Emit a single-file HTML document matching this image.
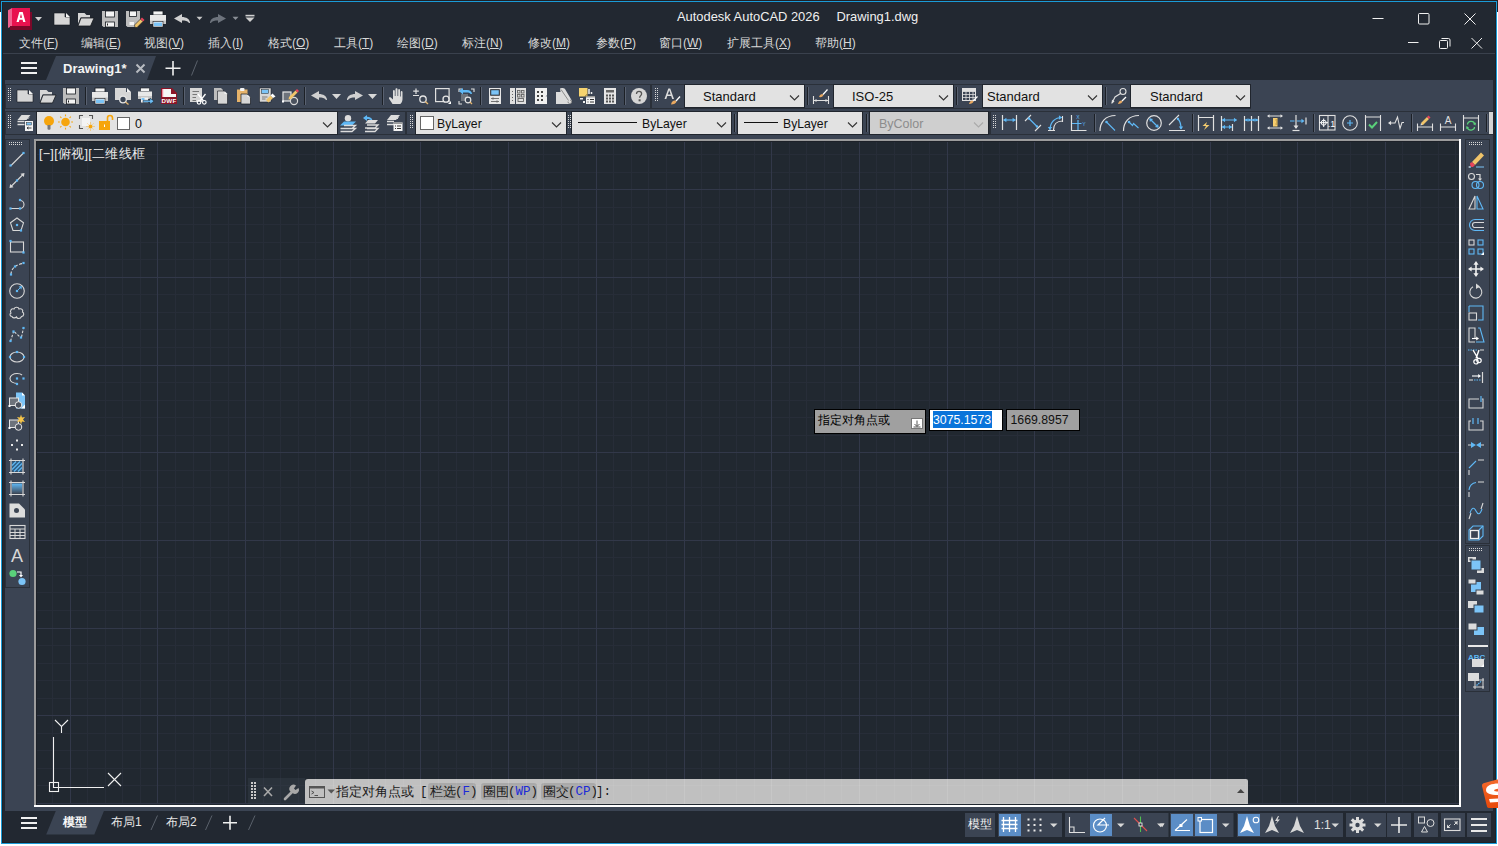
<!DOCTYPE html><html><head><meta charset="utf-8"><style>
*{margin:0;padding:0;box-sizing:border-box}
html,body{width:1498px;height:846px;overflow:hidden;background:#fff;font-family:"Liberation Sans",sans-serif}
div{position:absolute}
.t{white-space:nowrap;line-height:1.15}
.t u{text-decoration:underline;text-underline-offset:1px}
.k{background:#a6a6a6;border-radius:3px;padding:0 1px}
.k b{font-weight:normal;color:#2020c8;font-family:"Liberation Mono",monospace}
svg{position:absolute;left:0;top:0}
</style></head><body><div style="left:0px;top:0px;width:1498px;height:1px;background:#1f2126"></div><div style="left:0px;top:0px;width:1px;height:12px;background:#1f2126"></div><div style="left:1497px;top:0px;width:1px;height:12px;background:#1f2126"></div><div style="left:1px;top:1px;width:1496px;height:843px;background:#1a9bd7"></div><div style="left:2px;top:2px;width:1494px;height:841px;background:#1d2127"></div><div style="left:3px;top:2px;width:1492px;height:840px;background:#222831"></div><div style="left:3px;top:53px;width:1492px;height:1px;background:#3a414d"></div><div style="left:5px;top:80px;width:1488px;height:731px;background:#3b4453"></div><div style="left:5px;top:84px;width:646px;height:25px;background:#3b4453;box-shadow:inset 0 0 0 1px #2a3039;"></div><div style="left:651px;top:84px;width:600px;height:25px;background:#3b4453;box-shadow:inset 0 0 0 1px #2a3039;"></div><div style="left:5px;top:111px;width:401px;height:24px;background:#3b4453;box-shadow:inset 0 0 0 1px #2a3039;"></div><div style="left:406px;top:111px;width:584px;height:24px;background:#3b4453;box-shadow:inset 0 0 0 1px #2a3039;"></div><div style="left:990px;top:111px;width:503px;height:24px;background:#3b4453;box-shadow:inset 0 0 0 1px #2a3039;"></div><div style="left:685px;top:85px;width:119px;height:22px;background:#e2e2e2;box-shadow:0 0 0 1px #20252d;"></div><div style="left:834px;top:85px;width:119px;height:22px;background:#e2e2e2;box-shadow:0 0 0 1px #20252d;"></div><div style="left:983px;top:85px;width:119px;height:22px;background:#e2e2e2;box-shadow:0 0 0 1px #20252d;"></div><div style="left:1131px;top:85px;width:119px;height:22px;background:#e2e2e2;box-shadow:0 0 0 1px #20252d;"></div><div style="left:37px;top:112px;width:300px;height:22px;background:#e2e2e2;box-shadow:0 0 0 1px #20252d;"></div><div style="left:416px;top:112px;width:150px;height:22px;background:#e2e2e2;box-shadow:0 0 0 1px #20252d;"></div><div style="left:572px;top:112px;width:159px;height:22px;background:#e2e2e2;box-shadow:0 0 0 1px #20252d;"></div><div style="left:738px;top:112px;width:124px;height:22px;background:#e2e2e2;box-shadow:0 0 0 1px #20252d;"></div><div style="left:870px;top:112px;width:118px;height:22px;background:#cfcfcf;box-shadow:0 0 0 1px #20252d;"></div><div style="left:5px;top:139px;width:25px;height:449px;background:#3b4453;box-shadow:inset 0 0 0 1px #2a3039;"></div><div style="left:34px;top:139px;width:1427px;height:668px;background:#212830;"></div><div style="left:1465px;top:139px;width:25px;height:405px;background:#3b4453;box-shadow:inset 0 0 0 1px #2a3039;"></div><div style="left:1465px;top:545px;width:25px;height:147px;background:#3b4453;box-shadow:inset 0 0 0 1px #2a3039;"></div><svg width="1498" height="846" viewBox="0 0 1498 846"><path d="M56 56 L156 56 L147 80 L46 80 Z" fill="#3b4453"/><path d="M790.0 95.5 L794.5 100.0 L799.0 95.5" stroke="#333" stroke-width="1.1" fill="none"/><path d="M939.0 95.5 L943.5 100.0 L948.0 95.5" stroke="#333" stroke-width="1.1" fill="none"/><path d="M1088.0 95.5 L1092.5 100.0 L1097.0 95.5" stroke="#333" stroke-width="1.1" fill="none"/><path d="M1236.0 95.5 L1240.5 100.0 L1245.0 95.5" stroke="#333" stroke-width="1.1" fill="none"/><path d="M323.0 122.5 L327.5 127.0 L332.0 122.5" stroke="#333" stroke-width="1.1" fill="none"/><path d="M552.0 122.5 L556.5 127.0 L561.0 122.5" stroke="#333" stroke-width="1.1" fill="none"/><path d="M717.0 122.5 L721.5 127.0 L726.0 122.5" stroke="#333" stroke-width="1.1" fill="none"/><path d="M848.0 122.5 L852.5 127.0 L857.0 122.5" stroke="#333" stroke-width="1.1" fill="none"/><path d="M974.0 122.5 L978.5 127.0 L983.0 122.5" stroke="#aaa" stroke-width="1.1" fill="none"/></svg><div class="t" style="left:677px;top:9.5px;font-size:12.9px;color:#f0f0f0;">Autodesk AutoCAD 2026</div><div class="t" style="left:836.5px;top:9.5px;font-size:12.9px;color:#f0f0f0;">Drawing1.dwg</div><div class="t" style="left:19px;top:37px;font-size:12px;color:#d8d8d8;">文件(<u>F</u>)</div><div class="t" style="left:81px;top:37px;font-size:12px;color:#d8d8d8;">编辑(<u>E</u>)</div><div class="t" style="left:144px;top:37px;font-size:12px;color:#d8d8d8;">视图(<u>V</u>)</div><div class="t" style="left:208px;top:37px;font-size:12px;color:#d8d8d8;">插入(<u>I</u>)</div><div class="t" style="left:268px;top:37px;font-size:12px;color:#d8d8d8;">格式(<u>O</u>)</div><div class="t" style="left:334px;top:37px;font-size:12px;color:#d8d8d8;">工具(<u>T</u>)</div><div class="t" style="left:397px;top:37px;font-size:12px;color:#d8d8d8;">绘图(<u>D</u>)</div><div class="t" style="left:462px;top:37px;font-size:12px;color:#d8d8d8;">标注(<u>N</u>)</div><div class="t" style="left:528px;top:37px;font-size:12px;color:#d8d8d8;">修改(<u>M</u>)</div><div class="t" style="left:596px;top:37px;font-size:12px;color:#d8d8d8;">参数(<u>P</u>)</div><div class="t" style="left:659px;top:37px;font-size:12px;color:#d8d8d8;">窗口(<u>W</u>)</div><div class="t" style="left:727px;top:37px;font-size:12px;color:#d8d8d8;">扩展工具(<u>X</u>)</div><div class="t" style="left:815px;top:37px;font-size:12px;color:#d8d8d8;">帮助(<u>H</u>)</div><div class="t" style="left:63px;top:62px;font-size:13px;font-weight:bold;color:#f4f4f4;">Drawing1*</div><div class="t" style="left:703px;top:90px;font-size:13px;color:#111;">Standard</div><div class="t" style="left:852px;top:90px;font-size:13px;color:#111;">ISO-25</div><div class="t" style="left:987px;top:90px;font-size:13px;color:#111;">Standard</div><div class="t" style="left:1150px;top:90px;font-size:13px;color:#111;">Standard</div><div class="t" style="left:135px;top:117px;font-size:12.5px;color:#111;">0</div><div class="t" style="left:437px;top:117px;font-size:12.2px;color:#111;">ByLayer</div><div class="t" style="left:642px;top:117px;font-size:12.2px;color:#111;">ByLayer</div><div class="t" style="left:783px;top:117px;font-size:12.2px;color:#111;">ByLayer</div><div class="t" style="left:879px;top:117px;font-size:12.5px;color:#8c8c8c;">ByColor</div><svg width="1498" height="846" viewBox="0 0 1498 846"><rect x="52" y="141" width="1" height="663" fill="#272d38"/><rect x="87" y="141" width="1" height="663" fill="#272d38"/><rect x="105" y="141" width="1" height="663" fill="#272d38"/><rect x="122" y="141" width="1" height="663" fill="#272d38"/><rect x="140" y="141" width="1" height="663" fill="#272d38"/><rect x="175" y="141" width="1" height="663" fill="#272d38"/><rect x="193" y="141" width="1" height="663" fill="#272d38"/><rect x="210" y="141" width="1" height="663" fill="#272d38"/><rect x="228" y="141" width="1" height="663" fill="#272d38"/><rect x="263" y="141" width="1" height="663" fill="#272d38"/><rect x="280" y="141" width="1" height="663" fill="#272d38"/><rect x="298" y="141" width="1" height="663" fill="#272d38"/><rect x="315" y="141" width="1" height="663" fill="#272d38"/><rect x="350" y="141" width="1" height="663" fill="#272d38"/><rect x="368" y="141" width="1" height="663" fill="#272d38"/><rect x="385" y="141" width="1" height="663" fill="#272d38"/><rect x="403" y="141" width="1" height="663" fill="#272d38"/><rect x="438" y="141" width="1" height="663" fill="#272d38"/><rect x="456" y="141" width="1" height="663" fill="#272d38"/><rect x="473" y="141" width="1" height="663" fill="#272d38"/><rect x="491" y="141" width="1" height="663" fill="#272d38"/><rect x="526" y="141" width="1" height="663" fill="#272d38"/><rect x="543" y="141" width="1" height="663" fill="#272d38"/><rect x="561" y="141" width="1" height="663" fill="#272d38"/><rect x="578" y="141" width="1" height="663" fill="#272d38"/><rect x="613" y="141" width="1" height="663" fill="#272d38"/><rect x="631" y="141" width="1" height="663" fill="#272d38"/><rect x="648" y="141" width="1" height="663" fill="#272d38"/><rect x="666" y="141" width="1" height="663" fill="#272d38"/><rect x="701" y="141" width="1" height="663" fill="#272d38"/><rect x="719" y="141" width="1" height="663" fill="#272d38"/><rect x="736" y="141" width="1" height="663" fill="#272d38"/><rect x="754" y="141" width="1" height="663" fill="#272d38"/><rect x="789" y="141" width="1" height="663" fill="#272d38"/><rect x="806" y="141" width="1" height="663" fill="#272d38"/><rect x="824" y="141" width="1" height="663" fill="#272d38"/><rect x="841" y="141" width="1" height="663" fill="#272d38"/><rect x="876" y="141" width="1" height="663" fill="#272d38"/><rect x="894" y="141" width="1" height="663" fill="#272d38"/><rect x="911" y="141" width="1" height="663" fill="#272d38"/><rect x="929" y="141" width="1" height="663" fill="#272d38"/><rect x="964" y="141" width="1" height="663" fill="#272d38"/><rect x="982" y="141" width="1" height="663" fill="#272d38"/><rect x="999" y="141" width="1" height="663" fill="#272d38"/><rect x="1017" y="141" width="1" height="663" fill="#272d38"/><rect x="1052" y="141" width="1" height="663" fill="#272d38"/><rect x="1069" y="141" width="1" height="663" fill="#272d38"/><rect x="1087" y="141" width="1" height="663" fill="#272d38"/><rect x="1104" y="141" width="1" height="663" fill="#272d38"/><rect x="1139" y="141" width="1" height="663" fill="#272d38"/><rect x="1157" y="141" width="1" height="663" fill="#272d38"/><rect x="1174" y="141" width="1" height="663" fill="#272d38"/><rect x="1192" y="141" width="1" height="663" fill="#272d38"/><rect x="1227" y="141" width="1" height="663" fill="#272d38"/><rect x="1245" y="141" width="1" height="663" fill="#272d38"/><rect x="1262" y="141" width="1" height="663" fill="#272d38"/><rect x="1280" y="141" width="1" height="663" fill="#272d38"/><rect x="1315" y="141" width="1" height="663" fill="#272d38"/><rect x="1332" y="141" width="1" height="663" fill="#272d38"/><rect x="1350" y="141" width="1" height="663" fill="#272d38"/><rect x="1367" y="141" width="1" height="663" fill="#272d38"/><rect x="1402" y="141" width="1" height="663" fill="#272d38"/><rect x="1420" y="141" width="1" height="663" fill="#272d38"/><rect x="1438" y="141" width="1" height="663" fill="#272d38"/><rect x="1455" y="141" width="1" height="663" fill="#272d38"/><rect x="36" y="154" width="1423" height="1" fill="#272d38"/><rect x="36" y="172" width="1423" height="1" fill="#272d38"/><rect x="36" y="207" width="1423" height="1" fill="#272d38"/><rect x="36" y="224" width="1423" height="1" fill="#272d38"/><rect x="36" y="242" width="1423" height="1" fill="#272d38"/><rect x="36" y="259" width="1423" height="1" fill="#272d38"/><rect x="36" y="294" width="1423" height="1" fill="#272d38"/><rect x="36" y="312" width="1423" height="1" fill="#272d38"/><rect x="36" y="329" width="1423" height="1" fill="#272d38"/><rect x="36" y="347" width="1423" height="1" fill="#272d38"/><rect x="36" y="382" width="1423" height="1" fill="#272d38"/><rect x="36" y="400" width="1423" height="1" fill="#272d38"/><rect x="36" y="417" width="1423" height="1" fill="#272d38"/><rect x="36" y="435" width="1423" height="1" fill="#272d38"/><rect x="36" y="470" width="1423" height="1" fill="#272d38"/><rect x="36" y="487" width="1423" height="1" fill="#272d38"/><rect x="36" y="505" width="1423" height="1" fill="#272d38"/><rect x="36" y="522" width="1423" height="1" fill="#272d38"/><rect x="36" y="557" width="1423" height="1" fill="#272d38"/><rect x="36" y="575" width="1423" height="1" fill="#272d38"/><rect x="36" y="592" width="1423" height="1" fill="#272d38"/><rect x="36" y="610" width="1423" height="1" fill="#272d38"/><rect x="36" y="645" width="1423" height="1" fill="#272d38"/><rect x="36" y="663" width="1423" height="1" fill="#272d38"/><rect x="36" y="680" width="1423" height="1" fill="#272d38"/><rect x="36" y="698" width="1423" height="1" fill="#272d38"/><rect x="36" y="733" width="1423" height="1" fill="#272d38"/><rect x="36" y="750" width="1423" height="1" fill="#272d38"/><rect x="36" y="768" width="1423" height="1" fill="#272d38"/><rect x="36" y="785" width="1423" height="1" fill="#272d38"/><rect x="70" y="141" width="1" height="663" fill="#323849"/><rect x="157" y="141" width="1" height="663" fill="#323849"/><rect x="245" y="141" width="1" height="663" fill="#323849"/><rect x="333" y="141" width="1" height="663" fill="#323849"/><rect x="420" y="141" width="1" height="663" fill="#323849"/><rect x="508" y="141" width="1" height="663" fill="#323849"/><rect x="596" y="141" width="1" height="663" fill="#323849"/><rect x="684" y="141" width="1" height="663" fill="#323849"/><rect x="771" y="141" width="1" height="663" fill="#323849"/><rect x="859" y="141" width="1" height="663" fill="#323849"/><rect x="947" y="141" width="1" height="663" fill="#323849"/><rect x="1034" y="141" width="1" height="663" fill="#323849"/><rect x="1122" y="141" width="1" height="663" fill="#323849"/><rect x="1210" y="141" width="1" height="663" fill="#323849"/><rect x="1297" y="141" width="1" height="663" fill="#323849"/><rect x="1385" y="141" width="1" height="663" fill="#323849"/><rect x="36" y="189" width="1423" height="1" fill="#323849"/><rect x="36" y="277" width="1423" height="1" fill="#323849"/><rect x="36" y="365" width="1423" height="1" fill="#323849"/><rect x="36" y="452" width="1423" height="1" fill="#323849"/><rect x="36" y="540" width="1423" height="1" fill="#323849"/><rect x="36" y="628" width="1423" height="1" fill="#323849"/><rect x="36" y="715" width="1423" height="1" fill="#323849"/><rect x="36" y="803" width="1423" height="1" fill="#323849"/><rect x="34" y="139" width="1427" height="2" fill="#9c9c9c"/><rect x="34" y="139" width="2" height="668" fill="#9c9c9c"/><rect x="36" y="141" width="1423" height="1" fill="#1d2128"/><rect x="36" y="141" width="1" height="664" fill="#1d2128"/><rect x="34" y="805" width="1427" height="2" fill="#ffffff"/><rect x="1459" y="139" width="2" height="668" fill="#ffffff"/></svg><div class="t" style="left:39px;top:147px;font-size:12.5px;color:#ececec;letter-spacing:0.3px;">[−][俯视][二维线框</div><div style="left:248px;top:778px;width:57px;height:26px;background:rgba(60,68,80,0.35);"></div><div style="left:305px;top:779px;width:943px;height:25px;background:#c0c0c0;border-radius:3px 2px 0 0;"></div><div style="left:428px;top:783px;width:48px;height:17px;background:#a9a9a9;border-radius:3px;"></div><div style="left:481px;top:783px;width:56px;height:17px;background:#a9a9a9;border-radius:3px;"></div><div style="left:541px;top:783px;width:55px;height:17px;background:#a9a9a9;border-radius:3px;"></div><div style="left:814px;top:409px;width:112px;height:25px;background:#a0a0a0;border:1.5px solid #000;"></div><div style="left:911px;top:418px;width:12px;height:11px;background:#fff;border:1px solid #777;"></div><div style="left:929px;top:409px;width:74px;height:22px;background:#fff;border:1.5px solid #000;"></div><div style="left:933px;top:411px;width:59px;height:17px;background:#0a74da;"></div><div style="left:1006px;top:409px;width:74px;height:22px;background:#a0a0a0;border:1.5px solid #000;"></div><svg width="1498" height="846" viewBox="0 0 1498 846"><rect x="315" y="779" width="1" height="25" fill="rgba(255,255,255,0.06)"/><rect x="333" y="779" width="1" height="25" fill="rgba(255,255,255,0.12)"/><rect x="350" y="779" width="1" height="25" fill="rgba(255,255,255,0.06)"/><rect x="368" y="779" width="1" height="25" fill="rgba(255,255,255,0.06)"/><rect x="385" y="779" width="1" height="25" fill="rgba(255,255,255,0.06)"/><rect x="403" y="779" width="1" height="25" fill="rgba(255,255,255,0.06)"/><rect x="420" y="779" width="1" height="25" fill="rgba(255,255,255,0.12)"/><rect x="438" y="779" width="1" height="25" fill="rgba(255,255,255,0.06)"/><rect x="456" y="779" width="1" height="25" fill="rgba(255,255,255,0.06)"/><rect x="473" y="779" width="1" height="25" fill="rgba(255,255,255,0.06)"/><rect x="491" y="779" width="1" height="25" fill="rgba(255,255,255,0.06)"/><rect x="508" y="779" width="1" height="25" fill="rgba(255,255,255,0.12)"/><rect x="526" y="779" width="1" height="25" fill="rgba(255,255,255,0.06)"/><rect x="543" y="779" width="1" height="25" fill="rgba(255,255,255,0.06)"/><rect x="561" y="779" width="1" height="25" fill="rgba(255,255,255,0.06)"/><rect x="578" y="779" width="1" height="25" fill="rgba(255,255,255,0.06)"/><rect x="596" y="779" width="1" height="25" fill="rgba(255,255,255,0.12)"/><rect x="613" y="779" width="1" height="25" fill="rgba(255,255,255,0.06)"/><rect x="631" y="779" width="1" height="25" fill="rgba(255,255,255,0.06)"/><rect x="648" y="779" width="1" height="25" fill="rgba(255,255,255,0.06)"/><rect x="666" y="779" width="1" height="25" fill="rgba(255,255,255,0.06)"/><rect x="684" y="779" width="1" height="25" fill="rgba(255,255,255,0.12)"/><rect x="701" y="779" width="1" height="25" fill="rgba(255,255,255,0.06)"/><rect x="719" y="779" width="1" height="25" fill="rgba(255,255,255,0.06)"/><rect x="736" y="779" width="1" height="25" fill="rgba(255,255,255,0.06)"/><rect x="754" y="779" width="1" height="25" fill="rgba(255,255,255,0.06)"/><rect x="771" y="779" width="1" height="25" fill="rgba(255,255,255,0.12)"/><rect x="789" y="779" width="1" height="25" fill="rgba(255,255,255,0.06)"/><rect x="806" y="779" width="1" height="25" fill="rgba(255,255,255,0.06)"/><rect x="824" y="779" width="1" height="25" fill="rgba(255,255,255,0.06)"/><rect x="841" y="779" width="1" height="25" fill="rgba(255,255,255,0.06)"/><rect x="859" y="779" width="1" height="25" fill="rgba(255,255,255,0.12)"/><rect x="876" y="779" width="1" height="25" fill="rgba(255,255,255,0.06)"/><rect x="894" y="779" width="1" height="25" fill="rgba(255,255,255,0.06)"/><rect x="911" y="779" width="1" height="25" fill="rgba(255,255,255,0.06)"/><rect x="929" y="779" width="1" height="25" fill="rgba(255,255,255,0.06)"/><rect x="947" y="779" width="1" height="25" fill="rgba(255,255,255,0.12)"/><rect x="964" y="779" width="1" height="25" fill="rgba(255,255,255,0.06)"/><rect x="982" y="779" width="1" height="25" fill="rgba(255,255,255,0.06)"/><rect x="999" y="779" width="1" height="25" fill="rgba(255,255,255,0.06)"/><rect x="1017" y="779" width="1" height="25" fill="rgba(255,255,255,0.06)"/><rect x="1034" y="779" width="1" height="25" fill="rgba(255,255,255,0.12)"/><rect x="1052" y="779" width="1" height="25" fill="rgba(255,255,255,0.06)"/><rect x="1069" y="779" width="1" height="25" fill="rgba(255,255,255,0.06)"/><rect x="1087" y="779" width="1" height="25" fill="rgba(255,255,255,0.06)"/><rect x="1104" y="779" width="1" height="25" fill="rgba(255,255,255,0.06)"/><rect x="1122" y="779" width="1" height="25" fill="rgba(255,255,255,0.12)"/><rect x="1139" y="779" width="1" height="25" fill="rgba(255,255,255,0.06)"/><rect x="1157" y="779" width="1" height="25" fill="rgba(255,255,255,0.06)"/><rect x="1174" y="779" width="1" height="25" fill="rgba(255,255,255,0.06)"/><rect x="1192" y="779" width="1" height="25" fill="rgba(255,255,255,0.06)"/><rect x="1210" y="779" width="1" height="25" fill="rgba(255,255,255,0.12)"/><rect x="1227" y="779" width="1" height="25" fill="rgba(255,255,255,0.06)"/><rect x="1245" y="779" width="1" height="25" fill="rgba(255,255,255,0.06)"/><rect x="306" y="785" width="941" height="1" fill="rgba(255,255,255,0.06)"/><rect x="306" y="803" width="941" height="1" fill="rgba(255,255,255,0.12)"/></svg><div class="t" style="left:336px;top:785px;font-size:13px;color:#1a1a1a;">指定对角点或</div><div class="t" style="left:420px;top:785px;font-size:12.5px;color:#1a1a1a;font-family:'Liberation Mono',monospace;">[</div><div class="t" style="left:430px;top:785px;font-size:13px;color:#1a1a1a;">栏选</div><div class="t" style="left:455px;top:785px;font-size:12.5px;color:#1a1a1a;font-family:'Liberation Mono',monospace;">(<span style="color:#1c2ad8">F</span>)</div><div class="t" style="left:483px;top:785px;font-size:13px;color:#1a1a1a;">圈围</div><div class="t" style="left:508px;top:785px;font-size:12.5px;color:#1a1a1a;font-family:'Liberation Mono',monospace;">(<span style="color:#1c2ad8">WP</span>)</div><div class="t" style="left:543px;top:785px;font-size:13px;color:#1a1a1a;">圈交</div><div class="t" style="left:568px;top:785px;font-size:12.5px;color:#1a1a1a;font-family:'Liberation Mono',monospace;">(<span style="color:#1c2ad8">CP</span>)</div><div class="t" style="left:596px;top:785px;font-size:12.5px;color:#1a1a1a;font-family:'Liberation Mono',monospace;">]:</div><div class="t" style="left:818px;top:413.5px;font-size:12px;color:#000;">指定对角点或</div><div class="t" style="left:933px;top:413px;font-size:12.3px;color:#fff;">3075.1573</div><div class="t" style="left:1010.5px;top:413px;font-size:12.3px;color:#111;">1669.8957</div><svg width="1498" height="846" viewBox="0 0 1498 846"><path d="M8 10.3L12 8V26L8 28Z" fill="#ef6390"/><rect x="10" y="26" width="22" height="4" fill="#7b0829"/><rect x="30" y="12" width="2" height="18" fill="#7b0829"/><rect x="12" y="8" width="18" height="18" fill="#e8124f"/><path d="M16.5 22L19.3 12H22.7L25.5 22H23.2L22.6 19.7H19.4L18.8 22ZM19.9 17.7H22.1L21 13.8Z" fill="#fff"/><path d="M35 17H42L38.5 21Z" fill="#d0d0d0"/><g transform="translate(54 11)"><path d="M0 2H11V6H16V14H0Z" fill="#d6d6d6" stroke="#161a20" stroke-width="0.6"/><path d="M12 2L16 6H12Z" fill="#f4f4f4"/></g><g transform="translate(78 11)"><path d="M0 2H6.5L8.5 4H12V6.5H2.5L0 13Z" fill="#d6d6d6"/><path d="M3 7H16L12.5 15H0Z" fill="#d6d6d6" stroke="#161a20" stroke-width="0.8"/></g><g transform="translate(102 11)"><path d="M0 0H16V16H1.5L0 14.5Z" fill="#bdbdbd"/><rect x="3.5" y="0" width="9" height="6" fill="#f4f4f4" stroke="#161a20" stroke-width="0.8"/><rect x="3.5" y="11" width="9" height="5" fill="#f4f4f4" stroke="#161a20" stroke-width="0.8"/><rect x="5" y="12.5" width="1" height="2" fill="#222"/></g><g transform="translate(126 11)"><path d="M0 0H14V11L9 16H1.5L0 14.5Z" fill="#bdbdbd"/><rect x="3.5" y="0" width="7" height="5.5" fill="#f4f4f4" stroke="#161a20" stroke-width="0.8"/><path d="M3.5 11H8V14H3.5Z" fill="#f4f4f4"/><path d="M9 16.5L8.5 14L14.5 8L17 10.5L11 16.5Z" fill="#f0c46a" stroke="#161a20" stroke-width="0.6"/><path d="M14.5 8L16 6.5L18.5 9L17 10.5Z" fill="#e8435a"/></g><g transform="translate(150 11)"><rect x="3" y="0" width="10" height="4" fill="#f4f4f4" stroke="#161a20" stroke-width="0.8"/><rect x="0" y="4" width="16" height="9" fill="#e8e8e8"/><rect x="0" y="9.5" width="16" height="3.5" fill="#c6c6c6"/><rect x="3" y="10.5" width="10" height="5.5" fill="#f4f4f4" stroke="#161a20" stroke-width="0.6"/><rect x="4" y="11.5" width="8" height="3.5" fill="#7cc4f7"/></g><g transform="translate(174 11)"><path d="M0 7.5L8 3V6C12 6 16 8 16 12L15 12C14 10 11 9.5 8 9.5V12Z" fill="#d0d0d0"/></g><path d="M196.5 16.7H202.5L199.5 20.0Z" fill="#c8c8c8"/><g transform="translate(210 11)"><path d="M16 7.5L8 3V6C4 6 0 8 0 12L1 12C2 10 5 9.5 8 9.5V12Z" fill="#6d737c"/></g><path d="M232.5 16.7H238.5L235.5 20.0Z" fill="#8a8f96"/><rect x="245.5" y="14.8" width="9" height="1.6" fill="#d0d0d0"/><path d="M245.5 17.4H254.5L250.0 22.0Z" fill="#d0d0d0"/><g stroke="#f0f0f0" stroke-width="1" fill="none"><path d="M1372.5 18.5H1383.5"/><rect x="1418.5" y="13.5" width="10.5" height="10.5" rx="1"/><path d="M1464.5 13.5L1475.5 24.5M1475.5 13.5L1464.5 24.5"/><path d="M1408 42.5H1418.5"/><rect x="1439.5" y="40.5" width="8" height="8" rx="1"/><path d="M1441.5 38.5H1448.5A1.5 1.5 0 0 1 1450 40V46.5"/><path d="M1471.5 38L1482 48.5M1482 38L1471.5 48.5"/></g><g fill="#f0f0f0"><rect x="21" y="62" width="16" height="2"/><rect x="21" y="67" width="16" height="2"/><rect x="21" y="72" width="16" height="2"/></g><path d="M136.5 64.5L144.5 72.5M144.5 64.5L136.5 72.5" stroke="#b8bcc2" stroke-width="2"/><path d="M165.5 68.2H180.5M173 61V75.5" stroke="#f0f0f0" stroke-width="1.6"/><path d="M191.5 75.5L197.5 60.5" stroke="#5a616b" stroke-width="1"/><rect x="8" y="88" width="1" height="1" fill="#d8d8d8"/><rect x="10" y="88" width="1" height="1" fill="#d8d8d8"/><rect x="8" y="90" width="1" height="1" fill="#d8d8d8"/><rect x="10" y="90" width="1" height="1" fill="#d8d8d8"/><rect x="8" y="92" width="1" height="1" fill="#d8d8d8"/><rect x="10" y="92" width="1" height="1" fill="#d8d8d8"/><rect x="8" y="94" width="1" height="1" fill="#d8d8d8"/><rect x="10" y="94" width="1" height="1" fill="#d8d8d8"/><rect x="8" y="96" width="1" height="1" fill="#d8d8d8"/><rect x="10" y="96" width="1" height="1" fill="#d8d8d8"/><rect x="8" y="98" width="1" height="1" fill="#d8d8d8"/><rect x="10" y="98" width="1" height="1" fill="#d8d8d8"/><rect x="8" y="100" width="1" height="1" fill="#d8d8d8"/><rect x="10" y="100" width="1" height="1" fill="#d8d8d8"/><g transform="translate(17 88)"><path d="M0 2H11V6H16V14H0Z" fill="#d6d6d6" stroke="#161a20" stroke-width="0.6"/><path d="M12 2L16 6H12Z" fill="#f4f4f4"/></g><g transform="translate(40 88)"><path d="M0 2H6.5L8.5 4H12V6.5H2.5L0 13Z" fill="#d6d6d6"/><path d="M3 7H16L12.5 15H0Z" fill="#d6d6d6" stroke="#161a20" stroke-width="0.8"/></g><g transform="translate(63 88)"><path d="M0 0H16V16H1.5L0 14.5Z" fill="#bdbdbd"/><rect x="3.5" y="0" width="9" height="6" fill="#f4f4f4" stroke="#161a20" stroke-width="0.8"/><rect x="3.5" y="11" width="9" height="5" fill="#f4f4f4" stroke="#161a20" stroke-width="0.8"/><rect x="5" y="12.5" width="1" height="2" fill="#222"/></g><rect x="85" y="87" width="1" height="18" fill="#1c2026"/><rect x="86" y="87" width="1" height="18" fill="#596170"/><g transform="translate(92 88)"><rect x="3" y="0" width="10" height="4" fill="#f4f4f4" stroke="#161a20" stroke-width="0.8"/><rect x="0" y="4" width="16" height="9" fill="#e8e8e8"/><rect x="0" y="9.5" width="16" height="3.5" fill="#c6c6c6"/><rect x="3" y="10.5" width="10" height="5.5" fill="#f4f4f4" stroke="#161a20" stroke-width="0.6"/><rect x="4" y="11.5" width="8" height="3.5" fill="#7cc4f7"/></g><g transform="translate(115 88)"><path d="M0 0H11V4H16V12H0Z" fill="#d6d6d6"/><path d="M12 0L16 4H12Z" fill="#f4f4f4"/><circle cx="8" cy="11.5" r="3.3" fill="#3b4453" stroke="#e6e6e6" stroke-width="1.3"/><path d="M10.5 14L13.5 16.5" stroke="#e8b870" stroke-width="1.3"/></g><g transform="translate(138 88)"><rect x="2.5" y="0" width="9" height="3.5" fill="#f4f4f4" stroke="#161a20" stroke-width="0.6"/><rect x="0" y="3.5" width="14" height="7.5" fill="#e8e8e8"/><rect x="0" y="8" width="14" height="3" fill="#c6c6c6"/><rect x="3" y="9.5" width="7" height="5" fill="#f4f4f4"/><rect x="3.5" y="10" width="3" height="2" fill="#7cc4f7"/><path d="M5 12.3H12V10L16 13.2L12 16.3V14.3H5Z" fill="#6cbdf5" stroke="#161a20" stroke-width="0.5"/></g><g transform="translate(161 88)"><path d="M0 0H11L16 5V16H0Z" fill="#8c1427"/><path d="M1 1H10V6H15V9H1Z" fill="#f6f6f6"/><rect x="1" y="1" width="1.2" height="8" fill="#f08aa0"/><text x="8" y="15" font-family="Liberation Sans" font-weight="bold" font-size="6.2" fill="#fff" text-anchor="middle" letter-spacing="0.3">DWF</text></g><rect x="183" y="87" width="1" height="18" fill="#1c2026"/><rect x="184" y="87" width="1" height="18" fill="#596170"/><g transform="translate(190 88)"><rect x="0" y="0" width="12" height="14" fill="#d6d6d6"/><path d="M2.5 3.5H9M2.5 6.5H7M2.5 9.5H6M2.5 12.5H6" stroke="#777" stroke-width="1"/><path d="M8 6L13.5 13M15.5 6L10 13" stroke="#fff" stroke-width="1.3"/><circle cx="9" cy="14.3" r="1.8" fill="none" stroke="#fff" stroke-width="1.2"/><circle cx="14.3" cy="14.3" r="1.8" fill="none" stroke="#fff" stroke-width="1.2"/></g><g transform="translate(214 88)"><path d="M0 0H7L9 2V12H0Z" fill="#bdbdbd"/><path d="M3.5 3H10L13.5 6.5V16H3.5Z" fill="#d6d6d6" stroke="#161a20" stroke-width="0.6"/><path d="M10.5 3L13.5 6H10.5Z" fill="#f4f4f4"/></g><g transform="translate(237 88)"><rect x="0" y="1.5" width="10.5" height="12.5" fill="#e6b36a"/><rect x="3" y="0" width="4.5" height="3" rx="1" fill="#f4f4f4"/><path d="M4 6H10L13.5 9.5V16H4Z" fill="#d6d6d6" stroke="#161a20" stroke-width="0.7"/><path d="M10.5 6.5L13 9H10.5Z" fill="#f4f4f4"/></g><g transform="translate(259.5 88)"><rect x="0" y="0" width="11.5" height="14" fill="#d6d6d6" stroke="#161a20" stroke-width="0.5"/><rect x="2" y="1.5" width="7" height="4" fill="#7cc4f7" stroke="#222" stroke-width="0.5"/><path d="M2.5 9H8M2.5 11H6" stroke="#666" stroke-width="0.8"/><path d="M6.5 12L11 7.5L13.5 10L9 14.5Z" fill="#f0c46a"/><path d="M11 7.5L13 5.5L16 8.5L13.5 10Z" fill="#fff"/></g><g transform="translate(282 88)"><rect x="1" y="4" width="8" height="9" fill="#6d737c" stroke="#e6e6e6" stroke-width="1.2"/><rect x="0" y="12.5" width="2" height="2" fill="#fff"/><circle cx="12" cy="13" r="3.6" fill="#4b525e" stroke="#d8d8d8" stroke-width="1.2"/><path d="M7 9L13.5 2.5L15.5 4.5L9 11L6.5 11.5Z" fill="#f0c46a"/><path d="M13.5 2.5L15 1L17 3L15.5 4.5Z" fill="#e8435a"/></g><rect x="304" y="87" width="1" height="18" fill="#1c2026"/><rect x="305" y="87" width="1" height="18" fill="#596170"/><g transform="translate(311 88)"><path d="M0 7.5L8 3V6C12 6 16 8 16 12L15 12C14 10 11 9.5 8 9.5V12Z" fill="#d0d0d0"/></g><path d="M332 94H341L336.5 99Z" fill="#d8d8d8"/><g transform="translate(347 88)"><path d="M16 7.5L8 3V6C4 6 0 8 0 12L1 12C2 10 5 9.5 8 9.5V12Z" fill="#d0d0d0"/></g><path d="M368 94H377L372.5 99Z" fill="#d8d8d8"/><rect x="382" y="87" width="1" height="18" fill="#1c2026"/><rect x="383" y="87" width="1" height="18" fill="#596170"/><g transform="translate(389 88)"><path d="M3.5 16C2 13.5 0.5 11.5 0 10.5C-0.3 9.5 0.8 8.8 1.8 9.5L4 11.5V3C4 1.8 5.8 1.8 5.8 3V8H6.5V1.2C6.5 0 8.5 0 8.5 1.2V8H9.2V2C9.2 0.8 11 0.8 11 2V8.5H11.7V4C11.7 2.8 13.5 2.8 13.5 4V11C13.5 13.5 12 16 11 16Z" fill="#dcdcdc"/></g><g transform="translate(412 88)"><path d="M4 0.5V6M1.2 3.2H6.8M1 7.5H7" stroke="#e0e0e0" stroke-width="1.2"/><circle cx="11" cy="11.2" r="3.2" fill="none" stroke="#e6e6e6" stroke-width="1.3"/><path d="M13.3 13.5L16 16" stroke="#e8b870" stroke-width="1.3"/></g><g transform="translate(435 88)"><rect x="0.6" y="0.6" width="13.5" height="13" fill="none" stroke="#e0e0e0" stroke-width="1.2"/><circle cx="11" cy="11.2" r="3" fill="#3b4453" stroke="#e6e6e6" stroke-width="1.3"/><path d="M13 16L16 13V16Z" fill="#fff"/></g><g transform="translate(458 88)"><path d="M1 4V1H4M13 1H16V4M1 13V16H4" stroke="#e0e0e0" stroke-width="1.1" fill="none"/><rect x="3" y="6" width="7" height="7" fill="#6d737c"/><path d="M1 3L5 0V2H9C12 2 14 4 14 6H12.5C12 5 11 4.5 9 4.5H5V6.5Z" fill="#5fb8f5"/><circle cx="10" cy="12" r="2.8" fill="#3b4453" stroke="#e6e6e6" stroke-width="1.2"/><path d="M12 14L14 16" stroke="#e8b870" stroke-width="1.2"/></g><rect x="480" y="87" width="1" height="18" fill="#1c2026"/><rect x="481" y="87" width="1" height="18" fill="#596170"/><g transform="translate(489 88)"><rect x="0" y="0" width="12" height="16" fill="#e6e6e6"/><rect x="1.2" y="1.2" width="9.6" height="6.5" fill="#1e2228"/><rect x="2.2" y="2.2" width="7.6" height="4.5" fill="#7cc4f7"/><path d="M2 10.5H10M2 13.5H10" stroke="#666" stroke-width="0.9"/><path d="M4 9.5V11.5M8 12.5V14.5" stroke="#666" stroke-width="1.2"/></g><g transform="translate(510 88)"><rect x="0" y="0" width="5" height="16" fill="#e0e0e0"/><rect x="6" y="0" width="10" height="16" fill="#e0e0e0"/><g fill="#666"><rect x="2" y="3" width="1" height="1"/><rect x="2" y="6" width="1" height="1"/><rect x="2" y="9" width="1" height="1"/><rect x="2" y="12" width="1" height="1"/></g><g fill="none" stroke="#666" stroke-width="0.9"><rect x="7.5" y="2.5" width="2.5" height="2.5"/><rect x="11.5" y="2.5" width="2.5" height="2.5"/><rect x="7.5" y="6.5" width="2.5" height="2.5"/><rect x="11.5" y="6.5" width="2.5" height="2.5"/><rect x="8" y="10.5" width="5.5" height="3"/></g></g><g transform="translate(535 88)"><path d="M0 0H12V7L10.5 9L12 8V16H0Z" fill="#f0f0f0"/><g fill="#444"><rect x="2" y="3" width="2" height="2"/><rect x="6" y="3" width="2" height="2"/><rect x="2" y="7" width="2" height="2"/><rect x="6" y="7" width="2" height="2"/><rect x="2" y="11" width="2" height="2"/><rect x="6" y="11" width="2" height="2"/></g></g><g transform="translate(556 88)"><path d="M0 4H4.5L4 0.5C5 -0.5 8 0 9 1L15.5 12C16.5 14 15.5 16 13 16H0Z" fill="#dcdcdc"/><path d="M5 1.5L12.5 12.5M12 13.5A1.8 1.8 0 1 0 14 12" stroke="#777" stroke-width="0.8" fill="none"/></g><g transform="translate(579 88)"><path d="M0 0H8.5V5.5L5.5 8.5H0Z" fill="#f6d36e"/><path d="M5.5 8.5L8.5 5.5V8.5Z" fill="#c9a54a"/><path d="M10 1V6M12.5 4V6" stroke="#eee" stroke-width="1.5"/><rect x="1" y="10" width="3" height="1.5" fill="#eee"/><rect x="4" y="13" width="2" height="2" fill="#eee"/><rect x="7" y="8" width="9" height="8" fill="#f4f4f4"/><rect x="7" y="8" width="9" height="1.5" fill="#9a9a9a"/><path d="M8.5 11.5H9.5M11 11.5H15M8.5 14H9.5M11 14H15" stroke="#333" stroke-width="1"/></g><g transform="translate(604 88)"><rect x="0" y="0" width="12" height="16" fill="#e6e6e6"/><rect x="2" y="2" width="8" height="2.5" fill="#666"/><rect x="2" y="6.5" width="2" height="2" fill="#555"/><rect x="2" y="9.5" width="2" height="2" fill="#555"/><rect x="2" y="12.5" width="2" height="2" fill="#555"/><rect x="5" y="6.5" width="2" height="2" fill="#555"/><rect x="5" y="9.5" width="2" height="2" fill="#555"/><rect x="5" y="12.5" width="2" height="2" fill="#555"/><rect x="8" y="6.5" width="2" height="2" fill="#555"/><rect x="8" y="9.5" width="2" height="2" fill="#555"/><rect x="8" y="12.5" width="2" height="2" fill="#555"/></g><rect x="624" y="87" width="1" height="18" fill="#1c2026"/><rect x="625" y="87" width="1" height="18" fill="#596170"/><g transform="translate(631 88)"><circle cx="8" cy="8" r="8" fill="#d6d6d6"/><path d="M5.5 6C5.5 4.3 6.6 3.3 8 3.3C9.5 3.3 10.6 4.3 10.6 5.7C10.6 7.5 8.6 7.8 8.6 9.8" stroke="#555" stroke-width="1.3" fill="none"/><rect x="7.6" y="11.3" width="2" height="2" fill="#555"/></g><rect x="655" y="88" width="1" height="1" fill="#d8d8d8"/><rect x="657" y="88" width="1" height="1" fill="#d8d8d8"/><rect x="655" y="90" width="1" height="1" fill="#d8d8d8"/><rect x="657" y="90" width="1" height="1" fill="#d8d8d8"/><rect x="655" y="92" width="1" height="1" fill="#d8d8d8"/><rect x="657" y="92" width="1" height="1" fill="#d8d8d8"/><rect x="655" y="94" width="1" height="1" fill="#d8d8d8"/><rect x="657" y="94" width="1" height="1" fill="#d8d8d8"/><rect x="655" y="96" width="1" height="1" fill="#d8d8d8"/><rect x="657" y="96" width="1" height="1" fill="#d8d8d8"/><rect x="655" y="98" width="1" height="1" fill="#d8d8d8"/><rect x="657" y="98" width="1" height="1" fill="#d8d8d8"/><rect x="655" y="100" width="1" height="1" fill="#d8d8d8"/><rect x="657" y="100" width="1" height="1" fill="#d8d8d8"/><g transform="translate(664 88)"><path d="M0.5 11L4.3 0.5H6.2L10 11H8.2L7.2 8H3.3L2.3 11ZM3.8 6.5H6.7L5.25 2.3Z" fill="#dcdcdc"/><path d="M7 16.5C7.5 13.5 9.5 12 11.5 12.5L12.5 13.5C12 15.5 10 16.5 7 16.5Z" fill="#e8a860"/><path d="M12 13L16 8.5" stroke="#fff" stroke-width="1.3"/></g><rect x="807" y="87" width="1" height="18" fill="#1c2026"/><rect x="808" y="87" width="1" height="18" fill="#596170"/><g transform="translate(813 88)"><path d="M0.5 8V16M15.5 8V16M1 12.5H15" stroke="#e0e0e0" stroke-width="1.1"/><path d="M1 12.5L3.5 11V14ZM15 12.5L12.5 11V14Z" fill="#e0e0e0"/><path d="M6 9C6.5 7 8 6 9.5 6L10.5 7C10 8.5 8.5 9.5 6 9Z" fill="#e8a860"/><path d="M10 6.5L14.5 1.5" stroke="#fff" stroke-width="1.2"/></g><rect x="956" y="87" width="1" height="18" fill="#1c2026"/><rect x="957" y="87" width="1" height="18" fill="#596170"/><g transform="translate(962 88)"><rect x="0.5" y="0.5" width="13" height="12" fill="none" stroke="#e0e0e0" stroke-width="1"/><path d="M0.5 3.5H13.5M0.5 6.5H13.5M0.5 9.5H13.5M4 3.5V12.5M7.5 3.5V12.5M11 3.5V12.5" stroke="#e0e0e0" stroke-width="0.8"/><rect x="0.5" y="0.5" width="13" height="3" fill="#e0e0e0"/><path d="M7 16C7.5 13.5 9 12.5 10.5 12.5L11.5 13.5C11 15 9.5 16 7 16Z" fill="#e8a860"/><path d="M11 13L15.5 8.5" stroke="#fff" stroke-width="1.2"/></g><rect x="1105" y="87" width="1" height="18" fill="#1c2026"/><rect x="1106" y="87" width="1" height="18" fill="#596170"/><g transform="translate(1111 88)"><circle cx="12" cy="3.5" r="3" fill="none" stroke="#e0e0e0" stroke-width="1.1"/><path d="M9.5 5.5L4 9L1 15" stroke="#e0e0e0" stroke-width="1.1" fill="none"/><path d="M0.5 16L1 11.5L3.5 13.5Z" fill="#e0e0e0"/><path d="M7 16C7.5 13.5 9 12.5 10.5 12.5L11.5 13.5C11 15 9.5 16 7 16Z" fill="#e8a860"/><path d="M11 13L15 9" stroke="#fff" stroke-width="1.2"/></g><rect x="8" y="115" width="1" height="1" fill="#d8d8d8"/><rect x="10" y="115" width="1" height="1" fill="#d8d8d8"/><rect x="8" y="117" width="1" height="1" fill="#d8d8d8"/><rect x="10" y="117" width="1" height="1" fill="#d8d8d8"/><rect x="8" y="119" width="1" height="1" fill="#d8d8d8"/><rect x="10" y="119" width="1" height="1" fill="#d8d8d8"/><rect x="8" y="121" width="1" height="1" fill="#d8d8d8"/><rect x="10" y="121" width="1" height="1" fill="#d8d8d8"/><rect x="8" y="123" width="1" height="1" fill="#d8d8d8"/><rect x="10" y="123" width="1" height="1" fill="#d8d8d8"/><rect x="8" y="125" width="1" height="1" fill="#d8d8d8"/><rect x="10" y="125" width="1" height="1" fill="#d8d8d8"/><rect x="8" y="127" width="1" height="1" fill="#d8d8d8"/><rect x="10" y="127" width="1" height="1" fill="#d8d8d8"/><g transform="translate(16.5 115)"><path d="M5 0H14L10 5H1Z" fill="#dcdcdc"/><path d="M1 6.5H8M1 9.5H8" stroke="#dcdcdc" stroke-width="1.5"/><path d="M11 4L12.5 2.5" stroke="#dcdcdc" stroke-width="1"/><rect x="8.5" y="6" width="8" height="10" fill="#f4f4f4"/><rect x="10" y="7.5" width="5" height="2.5" fill="#7cc4f7" stroke="#333" stroke-width="0.5"/><path d="M10.5 13H15M10.5 13L12 12M10.5 13L12 14" stroke="#333" stroke-width="0.9" fill="none"/></g><g transform="translate(44 116)"><circle cx="5" cy="5" r="5" fill="#f6a50c"/><path d="M3.5 9H6.5V13C6.5 14 3.5 14 3.5 13Z" fill="#7a7a7a"/></g><g transform="translate(58 114.5)"><circle cx="7.5" cy="7.5" r="4.3" fill="#f6a50c"/><g stroke="#f6a50c" stroke-width="1.1"><path d="M7.5 0V1.8M7.5 13.2V15M0 7.5H1.8M13.2 7.5H15M2.2 2.2L3.4 3.4M11.6 11.6L12.8 12.8M12.8 2.2L11.6 3.4M3.4 11.6L2.2 12.8"/></g></g><g transform="translate(79 115)"><path d="M0.5 4V0.5H4M10 0.5H13.5V4M0.5 10V13.5H4" stroke="#555" stroke-width="1.1" fill="none"/><rect x="3" y="3" width="8" height="8" fill="#f4f4f4"/><circle cx="11.5" cy="11.5" r="2" fill="#f6a50c"/><g stroke="#f6a50c" stroke-width="0.8"><path d="M11.5 7.5V8.5M11.5 14.5V15.5M7.5 11.5H8.5M14.5 11.5H15.5M8.7 8.7L9.3 9.3M14.3 8.7L13.7 9.3M8.7 14.3L9.3 13.7M14.3 14.3L13.7 13.7"/></g></g><g transform="translate(99 115)"><rect x="0" y="6" width="11" height="9" fill="#f6a50c"/><path d="M8.5 6V3A2.5 2.5 0 0 1 13.5 3V5" stroke="#f6a50c" stroke-width="1.6" fill="none"/><rect x="5" y="9.5" width="1" height="2.5" fill="#fff"/></g><rect x="117.5" y="117.5" width="12" height="12" fill="#fff" stroke="#666" stroke-width="1"/><g transform="translate(340 115)"><circle cx="8" cy="3.2" r="3.2" fill="#dcdcdc"/><path d="M4 6.5H16L12 10.5H0Z" fill="#5fb8f5"/><path d="M4 10.5H15.5L12 13.5H0.5M4 13.5H15.5L12 16.5H0.5" stroke="#dcdcdc" stroke-width="1.3" fill="none"/></g><g transform="translate(363 115)"><path d="M0 3L4 0V1.8C7 1.8 9 3 9.5 5.5H8C7.5 4.5 6 4 4 4V6Z" fill="#5fb8f5"/><path d="M5 5H15L12 8.5H2Z" fill="#dcdcdc"/><path d="M4 10H15L12 13H2M4 13.5H15L12 16.5H2" stroke="#dcdcdc" stroke-width="1.3" fill="none"/></g><g transform="translate(386 115)"><path d="M5 0H14L10 5H1Z" fill="#dcdcdc"/><path d="M1 6.5H8M1 9.5H8" stroke="#dcdcdc" stroke-width="1.5"/><path d="M11 4L12.5 2.5" stroke="#dcdcdc" stroke-width="1"/><rect x="7.5" y="7.5" width="9" height="8.5" fill="#f4f4f4"/><rect x="7.5" y="7.5" width="9" height="1.5" fill="#9a9a9a"/><path d="M9 11H10M11 11H15M9 13.5H10M11 13.5H15" stroke="#333" stroke-width="1"/></g><rect x="410" y="115" width="1" height="1" fill="#d8d8d8"/><rect x="412" y="115" width="1" height="1" fill="#d8d8d8"/><rect x="410" y="117" width="1" height="1" fill="#d8d8d8"/><rect x="412" y="117" width="1" height="1" fill="#d8d8d8"/><rect x="410" y="119" width="1" height="1" fill="#d8d8d8"/><rect x="412" y="119" width="1" height="1" fill="#d8d8d8"/><rect x="410" y="121" width="1" height="1" fill="#d8d8d8"/><rect x="412" y="121" width="1" height="1" fill="#d8d8d8"/><rect x="410" y="123" width="1" height="1" fill="#d8d8d8"/><rect x="412" y="123" width="1" height="1" fill="#d8d8d8"/><rect x="410" y="125" width="1" height="1" fill="#d8d8d8"/><rect x="412" y="125" width="1" height="1" fill="#d8d8d8"/><rect x="410" y="127" width="1" height="1" fill="#d8d8d8"/><rect x="412" y="127" width="1" height="1" fill="#d8d8d8"/><rect x="420.5" y="116.5" width="13" height="13" fill="#fff" stroke="#666" stroke-width="1"/><rect x="568" y="115" width="1" height="1" fill="#d8d8d8"/><rect x="570" y="115" width="1" height="1" fill="#d8d8d8"/><rect x="568" y="117" width="1" height="1" fill="#d8d8d8"/><rect x="570" y="117" width="1" height="1" fill="#d8d8d8"/><rect x="568" y="119" width="1" height="1" fill="#d8d8d8"/><rect x="570" y="119" width="1" height="1" fill="#d8d8d8"/><rect x="568" y="121" width="1" height="1" fill="#d8d8d8"/><rect x="570" y="121" width="1" height="1" fill="#d8d8d8"/><rect x="568" y="123" width="1" height="1" fill="#d8d8d8"/><rect x="570" y="123" width="1" height="1" fill="#d8d8d8"/><rect x="568" y="125" width="1" height="1" fill="#d8d8d8"/><rect x="570" y="125" width="1" height="1" fill="#d8d8d8"/><rect x="568" y="127" width="1" height="1" fill="#d8d8d8"/><rect x="570" y="127" width="1" height="1" fill="#d8d8d8"/><rect x="578" y="122" width="59" height="1" fill="#111"/><rect x="734" y="114" width="1" height="18" fill="#1c2026"/><rect x="735" y="114" width="1" height="18" fill="#596170"/><rect x="744" y="122" width="34" height="1" fill="#111"/><rect x="866" y="114" width="1" height="18" fill="#1c2026"/><rect x="867" y="114" width="1" height="18" fill="#596170"/><rect x="993" y="115" width="1" height="1" fill="#d8d8d8"/><rect x="995" y="115" width="1" height="1" fill="#d8d8d8"/><rect x="993" y="117" width="1" height="1" fill="#d8d8d8"/><rect x="995" y="117" width="1" height="1" fill="#d8d8d8"/><rect x="993" y="119" width="1" height="1" fill="#d8d8d8"/><rect x="995" y="119" width="1" height="1" fill="#d8d8d8"/><rect x="993" y="121" width="1" height="1" fill="#d8d8d8"/><rect x="995" y="121" width="1" height="1" fill="#d8d8d8"/><rect x="993" y="123" width="1" height="1" fill="#d8d8d8"/><rect x="995" y="123" width="1" height="1" fill="#d8d8d8"/><rect x="993" y="125" width="1" height="1" fill="#d8d8d8"/><rect x="995" y="125" width="1" height="1" fill="#d8d8d8"/><rect x="993" y="127" width="1" height="1" fill="#d8d8d8"/><rect x="995" y="127" width="1" height="1" fill="#d8d8d8"/><g transform="translate(1001.5 115)"><path d="M1 0V15M15 0V15" stroke="#e0e0e0" stroke-width="1.2"/><path d="M2 5H14" stroke="#5fb8f5" stroke-width="1.2"/><path d="M1.8 5L4.88 2.8L4.88 7.2Z" fill="#5fb8f5"/><path d="M14.2 5L11.12 7.2L11.12 2.8Z" fill="#5fb8f5"/></g><g transform="translate(1025 115)"><path d="M0 6L6 0M10 16L16 10" stroke="#e0e0e0" stroke-width="1.1"/><path d="M4 3.5L12 11.5" stroke="#5fb8f5" stroke-width="1.2"/><circle cx="4" cy="3.5" r="1.2" fill="#5fb8f5"/><circle cx="12" cy="11.5" r="1.2" fill="#5fb8f5"/></g><g transform="translate(1048 115)"><path d="M2 15C2 7 7 2.5 14 2.5" stroke="#5fb8f5" stroke-width="1.2" fill="none"/><path d="M5.5 15C5.5 9.5 9 6 14.5 6" stroke="#e0e0e0" stroke-width="1.2" fill="none"/><path d="M14.5 1V7M0 15.5H7" stroke="#e0e0e0" stroke-width="1.1"/><path d="M2 15L-0.20000000000000018 11.92L4.2 11.92Z" fill="#5fb8f5"/><path d="M14 2.5L10.92 4.7L10.92 0.2999999999999998Z" fill="#5fb8f5"/></g><g transform="translate(1070.5 115)"><path d="M1 0V15.5H16" stroke="#e0e0e0" stroke-width="1.2" fill="none"/><path d="M7.5 5V15M1.5 8.5H11" stroke="#5fb8f5" stroke-width="1.2"/><text x="7.5" y="4.2" font-family="Liberation Sans" font-size="5" fill="#5fb8f5" text-anchor="middle">X</text><text x="13.5" y="10.5" font-family="Liberation Sans" font-size="5" fill="#5fb8f5" text-anchor="middle">Y</text></g><rect x="1094" y="114" width="1" height="18" fill="#1c2026"/><rect x="1095" y="114" width="1" height="18" fill="#596170"/><g transform="translate(1099.5 115)"><path d="M0.5 16C0.5 7 6 0.5 16 0.5" stroke="#e0e0e0" stroke-width="1.2" fill="none"/><path d="M7 7L15.5 15.5" stroke="#5fb8f5" stroke-width="1.1"/><circle cx="7" cy="7" r="1.3" fill="#5fb8f5"/></g><g transform="translate(1123 115)"><path d="M0.5 16C0.5 7 6 0.5 16 0.5" stroke="#e0e0e0" stroke-width="1.2" fill="none"/><path d="M6 7L9.5 10.5L10.5 8.5L15.5 13" stroke="#5fb8f5" stroke-width="1.1" fill="none"/><circle cx="6" cy="7" r="1.3" fill="#5fb8f5"/></g><g transform="translate(1146 115)"><circle cx="8" cy="8" r="7.3" stroke="#e0e0e0" stroke-width="1.2" fill="none"/><path d="M4 4L12 12" stroke="#5fb8f5" stroke-width="1.2"/><path d="M3.3 3.3L7.033523804664972 3.922253967444162L3.922253967444162 7.033523804664972Z" fill="#5fb8f5"/><path d="M12.7 12.7L8.966476195335028 12.077746032555838L12.077746032555838 8.966476195335028Z" fill="#5fb8f5"/></g><g transform="translate(1169 115)"><path d="M0 10L10 0M0 15.5H16" stroke="#e0e0e0" stroke-width="1.1"/><path d="M9 4C11 6 12 9 12 14" stroke="#5fb8f5" stroke-width="1.2" fill="none"/><circle cx="9" cy="4" r="1.2" fill="#5fb8f5"/><path d="M12 14.5L9.8 11.42L14.2 11.42Z" fill="#5fb8f5"/></g><rect x="1192" y="114" width="1" height="18" fill="#1c2026"/><rect x="1193" y="114" width="1" height="18" fill="#596170"/><g transform="translate(1198 115)"><path d="M0.5 0V16M15.5 0V16" stroke="#e0e0e0" stroke-width="1.2"/><path d="M1 2.5H15" stroke="#e0e0e0" stroke-width="1"/><path d="M9 7L4.5 11H8L6 15L11.5 10H8Z" fill="#f6cd6e"/></g><g transform="translate(1221 115)"><path d="M0.5 1V16M11.5 9V16" stroke="#e0e0e0" stroke-width="1.2"/><path d="M1 5H15.5M1 12H11" stroke="#5fb8f5" stroke-width="1.2"/><path d="M16 5L12.92 7.2L12.92 2.8Z" fill="#5fb8f5"/><path d="M11 12L7.92 14.2L7.92 9.8Z" fill="#5fb8f5"/><path d="M1 5L4.08 2.8L4.08 7.2Z" fill="#5fb8f5"/><path d="M1 12L4.08 9.8L4.08 14.2Z" fill="#5fb8f5"/></g><g transform="translate(1244 115)"><path d="M0.5 1V16M7.5 1V16M14.5 1V16" stroke="#e0e0e0" stroke-width="1.2"/><path d="M1 5H14" stroke="#5fb8f5" stroke-width="1.2"/><path d="M1 5L3.52 3.2L3.52 6.8Z" fill="#5fb8f5"/><path d="M7 5L4.48 6.8L4.48 3.2Z" fill="#5fb8f5"/><path d="M8 5L10.52 3.2L10.52 6.8Z" fill="#5fb8f5"/><path d="M14 5L11.48 6.8L11.48 3.2Z" fill="#5fb8f5"/></g><g transform="translate(1267 115)"><path d="M1 1H15M1 13H15" stroke="#e0e0e0" stroke-width="1.1"/><path d="M0 1L2.52 -0.8L2.52 2.8Z" fill="#e0e0e0"/><path d="M16 1L13.48 2.8L13.48 -0.8Z" fill="#e0e0e0"/><path d="M0 13L2.52 11.2L2.52 14.8Z" fill="#e0e0e0"/><path d="M16 13L13.48 14.8L13.48 11.2Z" fill="#e0e0e0"/><rect x="6" y="3" width="4.5" height="8.5" fill="#f6cd6e"/><path d="M8.5 5H10.5M9 7H10.5M8.5 9H10.5" stroke="#8a6a20" stroke-width="0.7"/></g><g transform="translate(1290 115)"><path d="M0 6H4.5M7 6H13" stroke="#5fb8f5" stroke-width="1.2"/><path d="M14.5 6L11.42 8.2L11.42 3.8Z" fill="#5fb8f5"/><path d="M16 2.5V9.5M6 0V13" stroke="#e0e0e0" stroke-width="1.2"/><path d="M6 14L3.5 10.5H8.5Z" fill="#e0e0e0"/><path d="M2.5 15.5H9.5" stroke="#e0e0e0" stroke-width="1.2"/></g><rect x="1313" y="114" width="1" height="18" fill="#1c2026"/><rect x="1314" y="114" width="1" height="18" fill="#596170"/><g transform="translate(1319 115)"><rect x="0.5" y="0.5" width="15.5" height="14.5" fill="none" stroke="#e0e0e0" stroke-width="1.1"/><path d="M9 0.5V15" stroke="#e0e0e0" stroke-width="1.1"/><circle cx="4.7" cy="7.7" r="2.5" fill="none" stroke="#fff" stroke-width="1"/><path d="M4.7 3.5V12M0.5 7.7H9" stroke="#fff" stroke-width="1"/><text x="12.5" y="12" font-family="Liberation Sans" font-size="9" fill="#fff" text-anchor="middle">.1</text></g><g transform="translate(1342 115)"><circle cx="8" cy="8" r="7.3" stroke="#e0e0e0" stroke-width="1.1" fill="none"/><path d="M8 5V11M5 8H11" stroke="#5fb8f5" stroke-width="1.2"/></g><g transform="translate(1365 115)"><path d="M0.5 0V16M15.5 0V16M1 2H15" stroke="#e0e0e0" stroke-width="1.1"/><path d="M4 9.5L7 12.5L12 7" stroke="#5ad07a" stroke-width="2" fill="none"/></g><g transform="translate(1388 115)"><path d="M2 8H7L9.5 2L12 13.5L14 7.5H16" stroke="#e0e0e0" stroke-width="1.1" fill="none"/><path d="M0 8L3.08 5.8L3.08 10.2Z" fill="#e0e0e0"/></g><rect x="1411" y="114" width="1" height="18" fill="#1c2026"/><rect x="1412" y="114" width="1" height="18" fill="#596170"/><g transform="translate(1417 115)"><path d="M0.5 8.5V16M15.5 8.5V16M1 12H15" stroke="#e0e0e0" stroke-width="1.1"/><path d="M5 10L4 8L10 2L12 4L6 10Z" fill="#f0c46a"/><path d="M10 2L11.5 0.5L13.5 2.5L12 4Z" fill="#e8435a"/><path d="M4 8L5 10L3.5 10.5Z" fill="#fff"/></g><g transform="translate(1440 115)"><path d="M0.5 8.5V16M15.5 8.5V16M1 12H15" stroke="#e0e0e0" stroke-width="1.1"/><text x="8" y="9" font-family="Liberation Sans" font-size="10" fill="#e0e0e0" text-anchor="middle">A</text></g><g transform="translate(1463 115)"><path d="M0.5 0V16M15.5 0V16M1 3H15" stroke="#e0e0e0" stroke-width="1.1"/><path d="M4.5 9.5A3.5 2.8 0 0 1 11.5 9M11.5 12A3.5 2.8 0 0 1 4.5 12.5" stroke="#5ad07a" stroke-width="1.3" fill="none"/><path d="M13 7.5L12.5 10.5L10 9Z" fill="#5ad07a"/><path d="M3 14L3.5 11L6 12.5Z" fill="#5ad07a"/></g><rect x="1486" y="114" width="1" height="18" fill="#1c2026"/><rect x="1487" y="114" width="1" height="18" fill="#596170"/><rect x="1489" y="112" width="4" height="22" fill="#d4d4d4"/><rect x="9" y="142" width="1" height="1" fill="#d8d8d8"/><rect x="9" y="144" width="1" height="1" fill="#d8d8d8"/><rect x="11" y="142" width="1" height="1" fill="#d8d8d8"/><rect x="11" y="144" width="1" height="1" fill="#d8d8d8"/><rect x="13" y="142" width="1" height="1" fill="#d8d8d8"/><rect x="13" y="144" width="1" height="1" fill="#d8d8d8"/><rect x="15" y="142" width="1" height="1" fill="#d8d8d8"/><rect x="15" y="144" width="1" height="1" fill="#d8d8d8"/><rect x="17" y="142" width="1" height="1" fill="#d8d8d8"/><rect x="17" y="144" width="1" height="1" fill="#d8d8d8"/><rect x="19" y="142" width="1" height="1" fill="#d8d8d8"/><rect x="19" y="144" width="1" height="1" fill="#d8d8d8"/><rect x="21" y="142" width="1" height="1" fill="#d8d8d8"/><rect x="21" y="144" width="1" height="1" fill="#d8d8d8"/><g transform="translate(9 150.5)"><path d="M2 15L14 3" stroke="#d8d8d8" stroke-width="1.1"/><rect x="0.3999999999999999" y="13.9" width="2.2" height="2.2" fill="#5fb8f5"/><rect x="13.4" y="1.4" width="2.2" height="2.2" fill="#5fb8f5"/></g><g transform="translate(9 172.5)"><path d="M2 14L14 2" stroke="#d8d8d8" stroke-width="1.1"/><path d="M0.5 15.5L1.1788225099390854 11.427064940365486L4.5729350596345135 14.821177490060915Z" fill="#d8d8d8"/><path d="M15.5 0.5L14.821177490060915 4.5729350596345135L11.427064940365486 1.1788225099390854Z" fill="#d8d8d8"/><rect x="6.9" y="6.9" width="2.2" height="2.2" fill="#5fb8f5"/></g><g transform="translate(9 194.5)"><path d="M2 14H10M11 6A4 4 0 0 1 11 14" stroke="#d8d8d8" stroke-width="1.1" fill="none"/><rect x="0.3999999999999999" y="12.9" width="2.2" height="2.2" fill="#5fb8f5"/><rect x="9.9" y="12.9" width="2.2" height="2.2" fill="#5fb8f5"/><rect x="9.9" y="4.4" width="2.2" height="2.2" fill="#5fb8f5"/></g><g transform="translate(9 216.5)"><path d="M8 1.5L14.5 6.3L12 14H4L1.5 6.3Z" stroke="#d8d8d8" stroke-width="1.1" fill="none"/><rect x="6.9" y="7.4" width="2.2" height="2.2" fill="#5fb8f5"/><rect x="10.9" y="12.9" width="2.2" height="2.2" fill="#5fb8f5"/></g><g transform="translate(9 238.5)"><rect x="1.5" y="3.5" width="13" height="10" stroke="#d8d8d8" stroke-width="1.1" fill="none"/><rect x="0.3999999999999999" y="1.4" width="2.2" height="2.2" fill="#5fb8f5"/><rect x="13.4" y="12.9" width="2.2" height="2.2" fill="#5fb8f5"/></g><g transform="translate(9 260.5)"><path d="M2 14C2 8 7 4 14 3" stroke="#d8d8d8" stroke-width="1.1" fill="none" stroke-dasharray="3 1.6"/><rect x="0.8999999999999999" y="12.9" width="2.2" height="2.2" fill="#5fb8f5"/><rect x="4.9" y="4.9" width="2.2" height="2.2" fill="#5fb8f5"/><rect x="13.4" y="1.4" width="2.2" height="2.2" fill="#5fb8f5"/></g><g transform="translate(9 282.5)"><circle cx="8" cy="8.5" r="7.3" stroke="#d8d8d8" stroke-width="1.1" fill="none"/><path d="M8 8.5L12 4.5" stroke="#5fb8f5" stroke-width="1"/><path d="M13 3.5L12.434314575050763 6.894112549695428L9.605887450304571 4.065685424949238Z" fill="#5fb8f5"/><rect x="6.9" y="7.4" width="2.2" height="2.2" fill="#5fb8f5"/></g><g transform="translate(9 304.5)"><path d="M3 12C0.5 12 0.5 9 2 8.5C0.5 6.5 2.5 3.5 5 4.5C6 2 9.5 2.5 10 4.5C12.5 3.5 14.5 5.5 13.5 7.5C15.5 8.5 15 12 12.5 12C11.5 14.5 8 14.5 7.5 12.5C6 14 3.5 13.5 3 12Z" stroke="#d8d8d8" stroke-width="1.1" fill="none"/></g><g transform="translate(9 326.5)"><path d="M1.5 14.5L4.5 5.5M5.5 5.5L11.5 11M12.5 10.5L14.5 1.5" stroke="#d8d8d8" stroke-width="1.1" stroke-dasharray="2.5 1.5"/><rect x="0.3999999999999999" y="13.4" width="2.2" height="2.2" fill="#5fb8f5"/><rect x="3.4" y="3.9" width="2.2" height="2.2" fill="#5fb8f5"/><rect x="10.9" y="9.9" width="2.2" height="2.2" fill="#5fb8f5"/><rect x="13.4" y="0.3999999999999999" width="2.2" height="2.2" fill="#5fb8f5"/></g><g transform="translate(9 348.5)"><ellipse cx="8" cy="8.5" rx="7" ry="5" stroke="#d8d8d8" stroke-width="1.1" fill="none"/><rect x="-0.10000000000000009" y="7.4" width="2.2" height="2.2" fill="#5fb8f5"/><rect x="6.9" y="2.4" width="2.2" height="2.2" fill="#5fb8f5"/><rect x="13.9" y="7.4" width="2.2" height="2.2" fill="#5fb8f5"/></g><g transform="translate(9 370.5)"><path d="M9 13C4 13 1 11 1 8C1 5 4.5 3 8 3C10 3 12 3.5 13 4.5" stroke="#d8d8d8" stroke-width="1.1" fill="none"/><rect x="6.9" y="6.9" width="2.2" height="2.2" fill="#5fb8f5"/><rect x="13.4" y="6.9" width="2.2" height="2.2" fill="#5fb8f5"/><rect x="6.9" y="12.4" width="2.2" height="2.2" fill="#5fb8f5"/></g><g transform="translate(9 392.5)"><path d="M7 0H13L16 3V16H7Z" fill="#7cc4f7"/><path d="M13 0V3H16Z" fill="#fff"/><path d="M16 12V16H12Z" fill="#fff"/><rect x="0.5" y="5.5" width="9" height="7.5" fill="#6d737c" stroke="#e6e6e6" stroke-width="1"/><circle cx="9.5" cy="12.5" r="3.3" fill="#4b525e" stroke="#e6e6e6" stroke-width="1"/><rect x="-0.5" y="12.5" width="2" height="2" fill="#fff"/></g><g transform="translate(9 414.5)"><rect x="0.5" y="5.5" width="9" height="7.5" fill="#6d737c" stroke="#e6e6e6" stroke-width="1"/><circle cx="9.5" cy="12.5" r="3.3" fill="#4b525e" stroke="#e6e6e6" stroke-width="1"/><rect x="-0.5" y="12.5" width="2" height="2" fill="#fff"/><path d="M12 0L13 3L16 2.5L14 5L16 7.5L13 7L12 10L11 7L8 7.5L10 5L8 2.5L11 3Z" fill="#f6c54a"/></g><g transform="translate(9 436.5)"><rect x="7" y="3" width="2" height="2" fill="#e8e8e8"/><rect x="2" y="7.5" width="2" height="2" fill="#e8e8e8"/><rect x="12" y="7.5" width="2" height="2" fill="#e8e8e8"/><rect x="7" y="12" width="2" height="2" fill="#e8e8e8"/></g><g transform="translate(9 458.5)"><path d="M2 0V16M14 0V16M0 2H16M0 14H16" stroke="#d8d8d8" stroke-width="1.1"/><rect x="3" y="3" width="10" height="10" fill="#2e5f86"/><path d="M3 7L7 3M3 11L11 3M5 13L13 5M9 13L13 9" stroke="#5fb8f5" stroke-width="1.1"/></g><g transform="translate(9 480.5)"><defs><linearGradient id="gd" x1="0" y1="0" x2="0" y2="1"><stop offset="0" stop-color="#5fb8f5"/><stop offset="1" stop-color="#3e4a5a"/></linearGradient></defs><path d="M2 0V16M14 0V16M0 2H16M0 14H16" stroke="#d8d8d8" stroke-width="1.1"/><rect x="3" y="3" width="10" height="10" fill="url(#gd)"/></g><g transform="translate(9 502.5)"><path d="M0.5 1H10L16 7V15H0.5Z" fill="#dcdcdc"/><circle cx="7.5" cy="8" r="2.5" fill="#3b4453"/></g><g transform="translate(9 524.5)"><rect x="1" y="1" width="15" height="13" fill="none" stroke="#d8d8d8" stroke-width="1.1"/><path d="M1 4.5H16M1 8H16M1 11H16M6 4.5V14M11 4.5V14" stroke="#d8d8d8" stroke-width="1"/></g><g transform="translate(9 546.5)"><text x="8" y="15" font-family="Liberation Sans" font-size="18" fill="#d8d8d8" text-anchor="middle">A</text></g><g transform="translate(9 568.5)"><circle cx="4" cy="5" r="3.6" fill="#5ad07a"/><path d="M8 3.5H12V7.5" stroke="#fff" stroke-width="1.2" fill="none"/><path d="M10 6.5H14L12 9Z" fill="#fff"/><circle cx="13" cy="13" r="3.6" fill="#7cc4f7"/></g><rect x="1469" y="142" width="1" height="1" fill="#d8d8d8"/><rect x="1469" y="144" width="1" height="1" fill="#d8d8d8"/><rect x="1471" y="142" width="1" height="1" fill="#d8d8d8"/><rect x="1471" y="144" width="1" height="1" fill="#d8d8d8"/><rect x="1473" y="142" width="1" height="1" fill="#d8d8d8"/><rect x="1473" y="144" width="1" height="1" fill="#d8d8d8"/><rect x="1475" y="142" width="1" height="1" fill="#d8d8d8"/><rect x="1475" y="144" width="1" height="1" fill="#d8d8d8"/><rect x="1477" y="142" width="1" height="1" fill="#d8d8d8"/><rect x="1477" y="144" width="1" height="1" fill="#d8d8d8"/><rect x="1479" y="142" width="1" height="1" fill="#d8d8d8"/><rect x="1479" y="144" width="1" height="1" fill="#d8d8d8"/><rect x="1481" y="142" width="1" height="1" fill="#d8d8d8"/><rect x="1481" y="144" width="1" height="1" fill="#d8d8d8"/><g transform="translate(1468 151)"><path d="M4 11L13 1.5L16 4.5L7 14Z" fill="#f0c46a"/><path d="M4 11L7 14L5.5 15.5C4.5 16.5 3 16 2.5 15L2 13C2 12 3 11.5 4 11Z" fill="#e8435a"/><path d="M1 16H3M8 16H16" stroke="#7cc4f7" stroke-width="1"/><path d="M0.5 16H2.5" stroke="#ddd" stroke-width="1"/></g><g transform="translate(1468 173)"><circle cx="3.5" cy="3.5" r="3" stroke="#d8d8d8" stroke-width="1.1" fill="none"/><path d="M8 1.5H12V6" stroke="#d8d8d8" stroke-width="1.2" fill="none"/><path d="M10 5.5H14L12 8Z" fill="#d8d8d8"/><circle cx="7.5" cy="12" r="3.5" stroke="#5fb8f5" stroke-width="1.1" fill="none"/><circle cx="12" cy="12" r="3.5" stroke="#5fb8f5" stroke-width="1.1" fill="none"/></g><g transform="translate(1468 195)"><path d="M7 1V14H1Z" stroke="#d8d8d8" stroke-width="1.1" fill="none"/><path d="M9 1V14H15Z" stroke="#5fb8f5" stroke-width="1.1" fill="none"/></g><g transform="translate(1468 217)"><path d="M16 2.5H7A5.5 5.5 0 0 0 7 13.5H16" stroke="#5fb8f5" stroke-width="1.1" fill="none"/><path d="M16 5.5H7A2.5 2.5 0 0 0 7 10.5H16" stroke="#d8d8d8" stroke-width="1.1" fill="none"/></g><g transform="translate(1468 239)"><rect x="1" y="1" width="5" height="5" stroke="#d8d8d8" stroke-width="1.1" fill="none"/><g stroke="#5fb8f5" stroke-width="1.1" fill="none"><rect x="10" y="1" width="5" height="5"/><rect x="1" y="10" width="5" height="5"/><rect x="10" y="10" width="5" height="5"/></g><path d="M16 13V16H13Z" fill="#fff"/></g><g transform="translate(1468 261)"><path d="M8 2V14M2 8H14" stroke="#f0f0f0" stroke-width="1.6"/><path d="M8 0L10.6 3.6399999999999997L5.4 3.6399999999999997Z" fill="#f0f0f0"/><path d="M8 16L5.4 12.36L10.6 12.36Z" fill="#f0f0f0"/><path d="M0 8L3.6399999999999997 5.4L3.6399999999999997 10.6Z" fill="#f0f0f0"/><path d="M16 8L12.36 10.6L12.36 5.4Z" fill="#f0f0f0"/></g><g transform="translate(1468 283)"><path d="M10 3.5A6 6 0 1 1 5 3.8" stroke="#d8d8d8" stroke-width="1.1" fill="none"/><path d="M8 0.5L12 3.5L8 6Z" fill="#d8d8d8"/></g><g transform="translate(1468 305)"><path d="M1 1H15V15H10" stroke="#5fb8f5" stroke-width="1.1" fill="none"/><rect x="1" y="8" width="7.5" height="7" stroke="#d8d8d8" stroke-width="1.1" fill="none"/><path d="M1 1V7" stroke="#5fb8f5" stroke-width="1.1"/></g><g transform="translate(1468 327)"><path d="M7 15H1V1H7V11" stroke="#d8d8d8" stroke-width="1.1" fill="none"/><path d="M10 1H12L16 15H8" stroke="#5fb8f5" stroke-width="1.1" fill="none"/><path d="M4 11.5H9" stroke="#fff" stroke-width="1.1"/><path d="M11 11.5L8.2 13.5L8.2 9.5Z" fill="#fff"/></g><g transform="translate(1468 349)"><path d="M0 1H9" stroke="#5fb8f5" stroke-width="1" stroke-dasharray="1.5 1"/><path d="M12 1H16" stroke="#d8d8d8" stroke-width="1"/><path d="M5 1L10 9.5M11 1L8 9.5" stroke="#fff" stroke-width="1.4"/><circle cx="8" cy="12.8" r="2.2" stroke="#fff" stroke-width="1.2" fill="none"/><circle cx="11" cy="11.5" r="2.2" stroke="#fff" stroke-width="1.2" fill="none"/></g><g transform="translate(1468 371)"><path d="M1 9H5" stroke="#d8d8d8" stroke-width="1.1"/><path d="M6 9H13" stroke="#5fb8f5" stroke-width="1" stroke-dasharray="1.5 1"/><path d="M14.5 1V12" stroke="#d8d8d8" stroke-width="1.2"/><path d="M4 5H11" stroke="#fff" stroke-width="1.1"/><path d="M13 5L10.2 7.0L10.2 3.0Z" fill="#fff"/></g><g transform="translate(1468 393)"><path d="M13 3V9" stroke="#5fb8f5" stroke-width="1.2"/><path d="M11 6H1V15H15V6H14" stroke="#d8d8d8" stroke-width="1.1" fill="none"/></g><g transform="translate(1468 415)"><path d="M5 3V9M10 3V9" stroke="#5fb8f5" stroke-width="1.2"/><path d="M3 6H1V15H15V6H12" stroke="#d8d8d8" stroke-width="1.1" fill="none"/></g><g transform="translate(1468 437)"><path d="M0 8H4M12 8H16" stroke="#d8d8d8" stroke-width="1.1"/><path d="M3 5L8 8L3 11ZM13 5L8 8L13 11Z" fill="#5fb8f5"/></g><g transform="translate(1468 459)"><path d="M1 11V16M10 1H16" stroke="#d8d8d8" stroke-width="1.1"/><path d="M1 9L8 2" stroke="#5fb8f5" stroke-width="1.1"/></g><g transform="translate(1468 481)"><path d="M1 11V16M10 1H16" stroke="#d8d8d8" stroke-width="1.1"/><path d="M1 9A8 8 0 0 1 8 1.5" stroke="#5fb8f5" stroke-width="1.1" fill="none"/></g><g transform="translate(1468 503)"><path d="M1 16L3 10M13 6L15 0" stroke="#d8d8d8" stroke-width="1.1"/><path d="M2 10C4 4 6 4 8 8C10 12 12 12 14 6" stroke="#5fb8f5" stroke-width="1.1" fill="none"/></g><g transform="translate(1468 525)"><path d="M5 1H15V11L11 15H1V5Z" stroke="#5fb8f5" stroke-width="1.1" fill="none"/><path d="M11 5L15 1M11 5V15" stroke="#5fb8f5" stroke-width="1.1"/><rect x="2.5" y="5.5" width="8" height="8" stroke="#f0f0f0" stroke-width="1.3" fill="none"/></g><rect x="1469" y="548" width="1" height="1" fill="#d8d8d8"/><rect x="1469" y="550" width="1" height="1" fill="#d8d8d8"/><rect x="1471" y="548" width="1" height="1" fill="#d8d8d8"/><rect x="1471" y="550" width="1" height="1" fill="#d8d8d8"/><rect x="1473" y="548" width="1" height="1" fill="#d8d8d8"/><rect x="1473" y="550" width="1" height="1" fill="#d8d8d8"/><rect x="1475" y="548" width="1" height="1" fill="#d8d8d8"/><rect x="1475" y="550" width="1" height="1" fill="#d8d8d8"/><rect x="1477" y="548" width="1" height="1" fill="#d8d8d8"/><rect x="1477" y="550" width="1" height="1" fill="#d8d8d8"/><rect x="1479" y="548" width="1" height="1" fill="#d8d8d8"/><rect x="1479" y="550" width="1" height="1" fill="#d8d8d8"/><rect x="1481" y="548" width="1" height="1" fill="#d8d8d8"/><rect x="1481" y="550" width="1" height="1" fill="#d8d8d8"/><g transform="translate(1468 557)"><rect x="0" y="0" width="8" height="5" fill="#dcdcdc"/><rect x="1.5" y="1.5" width="3" height="2" fill="#3b4453"/><rect x="9" y="11" width="7" height="5" fill="#dcdcdc"/><rect x="3" y="3" width="10" height="10" fill="#7cc4f7" stroke="#3b4453" stroke-width="1"/></g><g transform="translate(1468 579)"><rect x="3" y="3" width="10" height="10" fill="#7cc4f7"/><rect x="0" y="0" width="8" height="5" fill="#dcdcdc" stroke="#3b4453" stroke-width="1"/><rect x="8" y="11" width="8" height="5" fill="#dcdcdc" stroke="#3b4453" stroke-width="1"/></g><g transform="translate(1468 601)"><rect x="0" y="0" width="9" height="7" fill="#dcdcdc"/><rect x="6" y="4" width="10" height="8" fill="#7cc4f7" stroke="#3b4453" stroke-width="1"/></g><g transform="translate(1468 623)"><rect x="6" y="4" width="10" height="8" fill="#7cc4f7"/><rect x="0" y="0" width="9" height="7" fill="#dcdcdc" stroke="#3b4453" stroke-width="1"/></g><rect x="1468" y="645" width="20" height="2" fill="#e8e8e8"/><g transform="translate(1468 653)"><text x="0" y="7" font-family="Liberation Sans" font-weight="bold" font-size="8" fill="#5fb8f5">ABC</text><rect x="4" y="6" width="12" height="8" fill="#dcdcdc"/><path d="M16 11V14H13Z" fill="#fff"/></g><g transform="translate(1468 673)"><rect x="0" y="0" width="11" height="8" fill="#dcdcdc"/><path d="M7 5V16M15 5V16M5 7H16M5 14H16" stroke="#d8d8d8" stroke-width="1"/><path d="M8.5 12.5L13.5 8" stroke="#5fb8f5" stroke-width="1.2" stroke-dasharray="1.5 0.8"/></g><path d="M917 420.5V426M914.5 424L917 426.5L919.5 424M913.5 427H920.5" stroke="#444" stroke-width="0.9" fill="none"/><g stroke="#f0f0f0" stroke-width="1.1" fill="none"><path d="M53.5 737V787.5H104"/><rect x="49.5" y="782.5" width="9" height="9"/><path d="M55 720L61.5 726.5L68 720M61.5 726.5V733"/><path d="M108 773L121 786M121 773L108 786"/></g><rect x="251" y="782" width="2" height="2" fill="#c8c8c8"/><rect x="254" y="782" width="2" height="2" fill="#c8c8c8"/><rect x="251" y="785" width="2" height="2" fill="#c8c8c8"/><rect x="254" y="785" width="2" height="2" fill="#c8c8c8"/><rect x="251" y="788" width="2" height="2" fill="#c8c8c8"/><rect x="254" y="788" width="2" height="2" fill="#c8c8c8"/><rect x="251" y="791" width="2" height="2" fill="#c8c8c8"/><rect x="254" y="791" width="2" height="2" fill="#c8c8c8"/><rect x="251" y="794" width="2" height="2" fill="#c8c8c8"/><rect x="254" y="794" width="2" height="2" fill="#c8c8c8"/><rect x="251" y="797" width="2" height="2" fill="#c8c8c8"/><rect x="254" y="797" width="2" height="2" fill="#c8c8c8"/><path d="M264 787.5L272 796M272 787.5L264 796" stroke="#a8a8a8" stroke-width="1.6"/><path d="M285 799L292.5 791.5" stroke="#a8a8a8" stroke-width="2.6" stroke-linecap="round"/><path d="M291 792A4 4 0 0 1 296 785.5L294 788.5L295.5 790L298.5 788A4 4 0 0 1 292.5 793Z" fill="#a8a8a8"/><rect x="309.5" y="786.5" width="15" height="11" fill="none" stroke="#555" stroke-width="1"/><rect x="309.5" y="786.5" width="15" height="2" fill="#555"/><path d="M311.5 791L314 792.5L311.5 794M314.5 795.5H318" stroke="#444" stroke-width="0.9" fill="none"/><path d="M327.5 789.5H335.0L331.25 793.5Z" fill="#555"/><path d="M1237 793H1244.5L1240.75 789Z" fill="#444"/><g fill="#f0f0f0"><rect x="21" y="817" width="16" height="2"/><rect x="21" y="822" width="16" height="2"/><rect x="21" y="827" width="16" height="2"/></g><path d="M56.2 810H104.3L94.3 834.5H46.2Z" fill="#3b4453"/><g stroke="#5a616b" stroke-width="1"><path d="M151 830L157.5 815.5M205.5 830L212 815.5M248.5 830L255 815.5"/></g><path d="M223 822.7H237M230 815.8V829.7" stroke="#f0f0f0" stroke-width="1.6"/><rect x="965" y="813" width="30" height="24" fill="#3b4453"/><rect x="998" y="813" width="64" height="24" fill="#3b4453"/><rect x="1065" y="813" width="103.5" height="24" fill="#3b4453"/><rect x="1170" y="813" width="63.5" height="24" fill="#3b4453"/><rect x="1237" y="813" width="106" height="24" fill="#3b4453"/><rect x="1346" y="813" width="40" height="24" fill="#3b4453"/><rect x="1387" y="813" width="24" height="24" fill="#3b4453"/><rect x="1414" y="813" width="24" height="24" fill="#3b4453"/><rect x="1441" y="813" width="24" height="24" fill="#3b4453"/><rect x="1467" y="813" width="24" height="24" fill="#3b4453"/><rect x="999" y="814" width="22" height="22" fill="#5b8dc6"/><rect x="1090" y="814" width="22" height="22" fill="#5b8dc6"/><rect x="1171" y="814" width="22" height="22" fill="#5b8dc6"/><rect x="1195" y="814" width="22" height="22" fill="#5b8dc6"/><rect x="1238" y="814" width="22" height="22" fill="#5b8dc6"/><g stroke="#fff" stroke-width="1.3"><path d="M1003.5 817V832M1009.5 817V832M1015.5 817V832M1001.5 820.5H1017.5M1001.5 824.5H1017.5M1001.5 828.5H1017.5"/></g><rect x="1027.5" y="818.5" width="2" height="2" fill="#e8e8e8"/><rect x="1027.5" y="824.0" width="2" height="2" fill="#e8e8e8"/><rect x="1027.5" y="829.5" width="2" height="2" fill="#e8e8e8"/><rect x="1033.5" y="818.5" width="2" height="2" fill="#e8e8e8"/><rect x="1033.5" y="824.0" width="2" height="2" fill="#e8e8e8"/><rect x="1033.5" y="829.5" width="2" height="2" fill="#e8e8e8"/><rect x="1039.5" y="818.5" width="2" height="2" fill="#e8e8e8"/><rect x="1039.5" y="824.0" width="2" height="2" fill="#e8e8e8"/><rect x="1039.5" y="829.5" width="2" height="2" fill="#e8e8e8"/><path d="M1050 823.5H1057.5L1053.75 827.3Z" fill="#d8d8d8"/><path d="M1117 823.5H1124.5L1120.75 827.3Z" fill="#d8d8d8"/><path d="M1157 823.5H1164.5L1160.75 827.3Z" fill="#d8d8d8"/><path d="M1222 823.5H1229.5L1225.75 827.3Z" fill="#d8d8d8"/><path d="M1331.5 823.5H1339.0L1335.25 827.3Z" fill="#d8d8d8"/><path d="M1374 823.5H1381.5L1377.75 827.3Z" fill="#d8d8d8"/><path d="M1160 823.5H1164.5L1162.25 827.3Z" fill="#d8d8d8"/><path d="M1069.5 817V832.5H1085M1069.5 827H1074V832.5" stroke="#e0e0e0" stroke-width="1.1" fill="none"/><circle cx="1100" cy="825.5" r="6.5" stroke="#fff" stroke-width="1.2" fill="none"/><path d="M1105 818L1098 825H1109" stroke="#fff" stroke-width="1.2" fill="none"/><path d="M1134 818L1147 831" stroke="#e05050" stroke-width="1.1"/><path d="M1140.5 816.5V832" stroke="#50c050" stroke-width="1.1"/><rect x="1139" y="823" width="3" height="3" fill="#2b313b" stroke="#fff" stroke-width="0.8"/><path d="M1175 830.5H1190M1175 830.5L1187 819.5" stroke="#fff" stroke-width="1.2"/><rect x="1179.5" y="824" width="3" height="3" fill="#fff"/><rect x="1200" y="819.5" width="12.5" height="13" stroke="#fff" stroke-width="1.2" fill="none"/><rect x="1198" y="817.5" width="3.5" height="3.5" fill="#5b8dc6" stroke="#fff" stroke-width="1"/><path d="M1247 816L1250 826L1254 833L1247 830L1240 833L1244 826Z" fill="#fff"/><circle cx="1256" cy="820" r="2.8" stroke="#fff" stroke-width="1.1" fill="none"/><path d="M1272 816L1275 826L1279 833L1272 830L1265 833L1269 826Z" fill="#d8d8d8"/><path d="M1278 816L1275 821H1277.5L1275 825L1280 819.5H1277.5L1279 816Z" fill="#d8d8d8"/><path d="M1297 816L1300 826L1304 833L1297 830L1290 833L1294 826Z" fill="#d8d8d8"/><g fill="#dcdcdc"><circle cx="1357.5" cy="825" r="5.5"/><rect x="1356" y="817" width="3" height="4" transform="rotate(0 1357.5 825)"/><rect x="1356" y="817" width="3" height="4" transform="rotate(45 1357.5 825)"/><rect x="1356" y="817" width="3" height="4" transform="rotate(90 1357.5 825)"/><rect x="1356" y="817" width="3" height="4" transform="rotate(135 1357.5 825)"/><rect x="1356" y="817" width="3" height="4" transform="rotate(180 1357.5 825)"/><rect x="1356" y="817" width="3" height="4" transform="rotate(225 1357.5 825)"/><rect x="1356" y="817" width="3" height="4" transform="rotate(270 1357.5 825)"/><rect x="1356" y="817" width="3" height="4" transform="rotate(315 1357.5 825)"/></g><circle cx="1357.5" cy="825" r="2.2" fill="#3b4453"/><path d="M1391 825H1407M1399 817V833" stroke="#e8e8e8" stroke-width="1.6"/><rect x="1418.5" y="817" width="6" height="6" stroke="#dcdcdc" stroke-width="1" fill="none"/><circle cx="1430.5" cy="823" r="3.5" stroke="#dcdcdc" stroke-width="1" fill="none"/><path d="M1424.5 826.5L1427.5 832H1421.5Z" stroke="#dcdcdc" stroke-width="1" fill="none"/><rect x="1444.5" y="819" width="15.5" height="11.5" stroke="#dcdcdc" stroke-width="1.1" fill="none"/><path d="M1447 828L1450.5 824.5M1457.5 821.5L1454 825" stroke="#dcdcdc" stroke-width="1"/><path d="M1447 824.5V828H1450.5ZM1457.5 825V821.5H1454Z" fill="#dcdcdc"/><g fill="#e8e8e8"><rect x="1471" y="818" width="16" height="2"/><rect x="1471" y="824" width="16" height="2"/><rect x="1471" y="830" width="16" height="2"/></g></svg><div class="t" style="left:1314px;top:819px;font-size:12px;color:#e0e0e0;">1:1</div><div class="t" style="left:63px;top:816px;font-size:12px;color:#f8f8f8;font-weight:bold;">模型</div><div class="t" style="left:111px;top:816px;font-size:12px;color:#e4e4e4;">布局1</div><div class="t" style="left:166px;top:816px;font-size:12px;color:#e4e4e4;">布局2</div><div class="t" style="left:968px;top:818px;font-size:12px;color:#f0f0f0;">模型</div><svg width="1498" height="846" viewBox="0 0 1498 846"><defs><linearGradient id="sg" x1="0" y1="0" x2="0" y2="1"><stop offset="0" stop-color="#f46a2c"/><stop offset="1" stop-color="#e8480a"/></linearGradient></defs><path d="M1483.5 783.2L1497 779.5H1498V808H1489Q1487.5 808 1487 806.5L1482 786Q1481.8 784 1483.5 783.2Z" fill="url(#sg)"/><path d="M1498 783.5C1492 783.5 1486 785.5 1486 790C1486 793.5 1490 795 1498 795V791.5C1494 791.5 1493.5 790.5 1495 789.5C1496 789 1497 788.8 1498 788.8Z" fill="#fff"/><path d="M1489 799L1498 798.5V802L1490 802.5Z" fill="#fff"/></svg></body></html>
